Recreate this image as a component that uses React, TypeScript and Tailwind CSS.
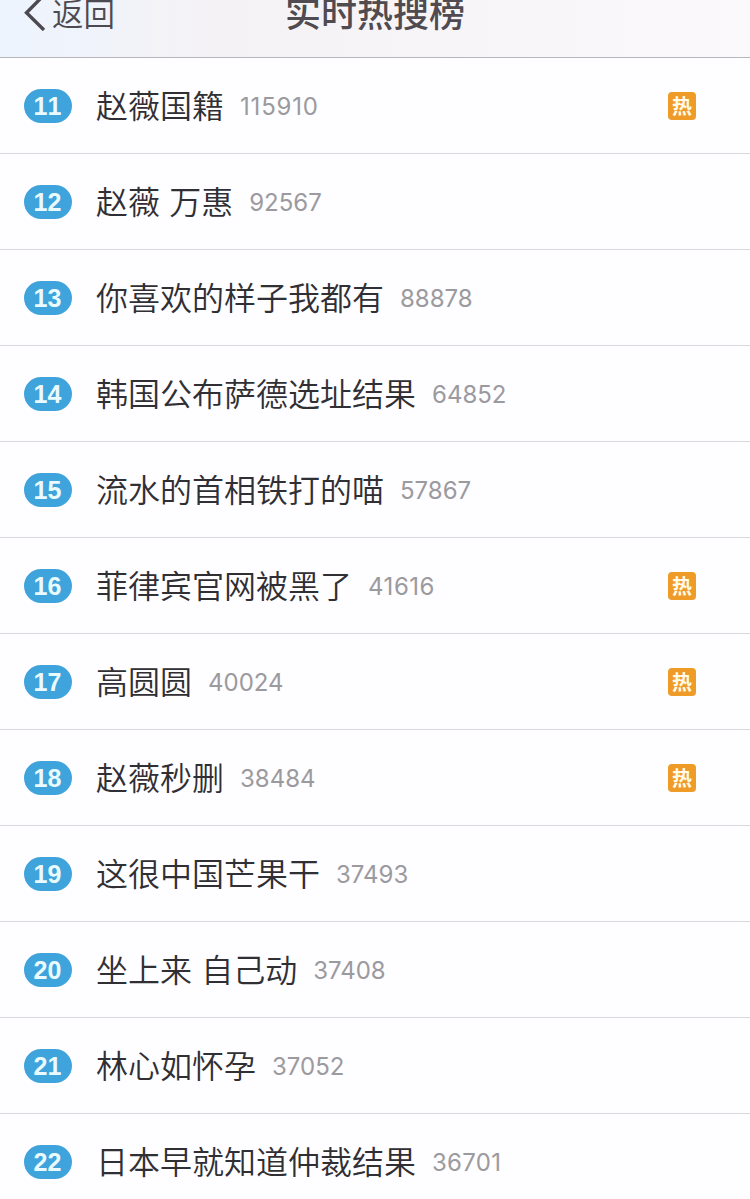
type Topic = { rank: number; title: string; count: number; hot?: boolean };

const topics: Topic[] = [
  { rank: 11, title: "赵薇国籍", count: 115910, hot: true },
  { rank: 12, title: "赵薇 万惠", count: 92567 },
  { rank: 13, title: "你喜欢的样子我都有", count: 88878 },
  { rank: 14, title: "韩国公布萨德选址结果", count: 64852 },
  { rank: 15, title: "流水的首相铁打的喵", count: 57867 },
  { rank: 16, title: "菲律宾官网被黑了", count: 41616, hot: true },
  { rank: 17, title: "高圆圆", count: 40024, hot: true },
  { rank: 18, title: "赵薇秒删", count: 38484, hot: true },
  { rank: 19, title: "这很中国芒果干", count: 37493 },
  { rank: 20, title: "坐上来 自己动", count: 37408 },
  { rank: 21, title: "林心如怀孕", count: 37052 },
  { rank: 22, title: "日本早就知道仲裁结果", count: 36701 },
];

function tracking(count: number) {
  const ones = String(count).split("1").length - 1;
  return `${ones * 0.27}px`;
}

function Header() {
  return (
    <header className="grid h-[58px] grid-cols-[1fr_auto_1fr] items-start overflow-hidden border-b border-[#b9b6bb] bg-linear-to-r from-[#edf4fe] via-[#f5f2f5] via-30% to-[#fbf9fc]">
      <button className="flex items-start pl-6 text-[#4c4a50]">
        <svg className="h-[31px] w-[22px]" viewBox="0 0 22 31" fill="none" stroke="currentColor" strokeWidth="3.4">
          <path d="M20 -5 L2.5 12.8 L20 30" />
        </svg>
        <span className="-mt-[4px] ml-[6px] text-[31.5px] leading-8 font-[350] whitespace-nowrap">返回</span>
      </button>
      <h1 className="-mt-[7px] text-4xl leading-9 font-medium whitespace-nowrap text-[#4f4b50]">实时热搜榜</h1>
      <span />
    </header>
  );
}

function Row({ rank, title, count, hot }: Topic) {
  return (
    <li className="flex h-24 shrink-0 items-center border-b border-[#d9d8dd] pr-[54px] pl-6">
      <span className="flex h-[34px] w-12 items-center justify-center rounded-full bg-[#3fa4db] pt-px pr-px font-['Liberation_Sans',sans-serif] text-[25px] leading-none font-bold text-[#e9fbff] [font-kerning:none]">
        {rank}
      </span>
      <span className="ml-6 pb-1 text-[32px] leading-10 font-[350] whitespace-nowrap text-[#302f34] [word-spacing:2px]">{title}</span>
      <span
        className="ml-4 pt-[2px] font-['Inter',sans-serif] text-2xl leading-none text-[#9b9a9e]"
        style={{ letterSpacing: tracking(count) }}
      >
        {count}
      </span>
      {hot && (
        <span className="ml-auto flex size-7 items-center justify-center rounded-[4px] bg-[#ee9b27] text-[20px] leading-none font-bold text-[#fffbe8]">
          热
        </span>
      )}
    </li>
  );
}

export default function App() {
  return (
    <main className="h-[1199px] w-[750px] overflow-hidden bg-[#fefdff] font-['Noto_Sans_CJK_SC',sans-serif]">
      <Header />
      <ul className="flex flex-col">
        {topics.map((t) => (
          <Row key={t.rank} {...t} />
        ))}
      </ul>
    </main>
  );
}
